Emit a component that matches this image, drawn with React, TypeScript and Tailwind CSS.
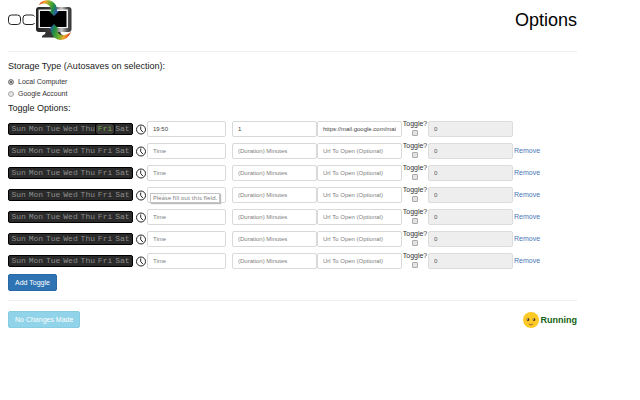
import React, { useState } from "react";

const DAYS = ["Sun", "Mon", "Tue", "Wed", "Thu", "Fri", "Sat"];

type Row = { id: number; time: string; minutes: string; url: string; days: string[] };

const ROWS: Row[] = [
  { id: 1, time: "19:50", minutes: "1", url: "https://mail.google.com/mail", days: ["Fri"] },
  { id: 2, time: "", minutes: "", url: "", days: [] },
  { id: 3, time: "", minutes: "", url: "", days: [] },
  { id: 4, time: "", minutes: "", url: "", days: [] },
  { id: 5, time: "", minutes: "", url: "", days: [] },
  { id: 6, time: "", minutes: "", url: "", days: [] },
  { id: 7, time: "", minutes: "", url: "", days: [] },
];

const FIELD =
  "block h-4 w-full min-w-0 rounded-xs border border-[#d9d9d9] bg-white px-[5px] text-[6px] leading-3 text-[#444] placeholder:text-[#808080] outline-none";

function Logo() {
  return (
    <svg className="block h-10 w-16" viewBox="0 0 64 40" role="img" aria-label="OC">
      <defs>
        <linearGradient id="bezel" x1="0" y1="0" x2="1" y2="0">
          <stop offset="0" stopColor="#222" />
          <stop offset="0.5" stopColor="#444" />
          <stop offset="0.72" stopColor="#c4c4c4" />
          <stop offset="0.88" stopColor="#555" />
          <stop offset="1" stopColor="#333" />
        </linearGradient>
        <linearGradient id="arcTop" gradientUnits="userSpaceOnUse" x1="32" y1="2" x2="50" y2="9">
          <stop offset="0" stopColor="#e0401c" />
          <stop offset="0.25" stopColor="#f3a52c" />
          <stop offset="0.5" stopColor="#6cb02c" />
          <stop offset="0.75" stopColor="#1f8a46" />
          <stop offset="1" stopColor="#2f5cb0" />
        </linearGradient>
        <linearGradient id="arcBottom" gradientUnits="userSpaceOnUse" x1="42" y1="29" x2="62" y2="36">
          <stop offset="0" stopColor="#2f5cb0" />
          <stop offset="0.2" stopColor="#1f8a46" />
          <stop offset="0.5" stopColor="#6cb02c" />
          <stop offset="0.75" stopColor="#f3a52c" />
          <stop offset="1" stopColor="#d92f1c" />
        </linearGradient>
      </defs>
      <rect x="0.500" y="15" width="12" height="9.500" rx="3" fill="none" stroke="#222" />
      <path d="M26.500 16.500Q26 15 24 15H18Q15 15 15 18V21.500Q15 24.500 18 24.500H24Q26 24.500 26.500 23" fill="none" stroke="#222" />
      <path d="M38 31H52L53 34L56 36V37.500H34V36L37 34Z" fill="#333" />
      <rect x="28" y="7" width="35.500" height="25" rx="3" fill="url(#bezel)" />
      <rect x="30.500" y="9.500" width="29.500" height="18.500" fill="#f2f2f2" />
      <rect x="32" y="11" width="26.500" height="16" fill="#000" />
      <path d="M31 5C33 0 41-1 45 2C48 4 49 7 49 11H51L46 16L41 11H43C43 6 39 1 31 5Z" fill="url(#arcTop)" />
      <path d="M46 24L51 29H49C49 35 55 38 63 32C60 40 52 42 47 38C44 36 43 33 43 29H41Z" fill="url(#arcBottom)" />
    </svg>
  );
}

function Clock() {
  return (
    <svg className="block h-[11px] w-[11px]" viewBox="0 0 11 11" fill="none" stroke="#222" aria-hidden="true">
      <circle cx="5" cy="5.500" r="4.500" strokeWidth="1" />
      <path d="M4.700 2.500V5.500L6.800 8" strokeWidth="1" />
    </svg>
  );
}

function Smiley() {
  return (
    <svg className="h-4 w-4" viewBox="0 0 16 16" aria-hidden="true">
      <circle cx="8" cy="8" r="8" fill="#fcc926" />
      <ellipse cx="5" cy="7.500" rx="1.300" ry="1.500" fill="#5a3a22" />
      <ellipse cx="11" cy="7.500" rx="1.300" ry="1.500" fill="#5a3a22" />
      <circle cx="4.500" cy="7" r="0.500" fill="#fff" />
      <circle cx="10.500" cy="7" r="0.500" fill="#fff" />
      <path d="M6 12Q8 14 10 12" fill="none" stroke="#a0642a" />
    </svg>
  );
}

function DayPicker({ initial }: { initial: string[] }) {
  const [picked, setPicked] = useState(initial);
  const flip = (day: string) =>
    setPicked(picked.includes(day) ? picked.filter((d) => d !== day) : [...picked, day]);
  return (
    <div className="mr-[3px] grid h-3 grid-cols-7 rounded-xs border border-black bg-[#2a2a2a] px-px">
      {DAYS.map((day) => (
        <button
          key={day}
          type="button"
          aria-pressed={picked.includes(day)}
          onClick={() => flip(day)}
          className={
            "flex items-center justify-center font-['Liberation_Mono',monospace] text-[8px] leading-[10px] " +
            (picked.includes(day)
              ? "rounded-xs bg-[#3b3838] text-[#6fa548] outline outline-black"
              : "text-[#8c8c8c]")
          }
        >
          {day}
        </button>
      ))}
    </div>
  );
}

function ToggleRow({ row, first, hint }: { row: Row; first: boolean; hint: boolean }) {
  return (
    <div className="grid h-[22px] grid-cols-[128px_11px_1fr_1fr_1fr_26px_1fr_64px] items-center">
      <DayPicker initial={row.days} />
      <Clock />
      <div className="relative min-w-0 pr-1.5">
        <input className={FIELD} aria-label="Time" placeholder="Time" defaultValue={row.time} required />
        {hint && (
          <div
            role="tooltip"
            className="absolute top-1.5 left-[3px] z-10 border border-[#c4c4c4] bg-white/80 px-0.5 font-['Open_Sans',sans-serif] text-[6px] leading-2 whitespace-nowrap text-[#777] shadow-[1px_1px_1px_#bbb]"
          >
            Please fill out this field.
          </div>
        )}
      </div>
      <input className={FIELD} aria-label="Duration in minutes" placeholder="(Duration) Minutes" defaultValue={row.minutes} />
      <input className={FIELD} aria-label="Url to open" placeholder="Url To Open (Optional)" defaultValue={row.url} />
      <label className="flex h-[22px] flex-col items-center gap-px pt-px text-[7px] leading-[10px]">
        Toggle?
        <input
          type="checkbox"
          className="h-1.5 w-1.5 shrink-0 appearance-none rounded-[1px] border border-[#aaa] bg-[#e4e4e4] checked:bg-[#555]"
        />
      </label>
      <input
        className="block h-4 w-full min-w-0 rounded-xs border border-[#dcdcdc] bg-[#eee] px-[5px] text-[6px] leading-3 text-[#555]"
        aria-label="Count"
        defaultValue="0"
        disabled
      />
      {!first && (
        <a href="#remove" className="pl-px text-[7px] leading-3 text-[#4a76b8]">
          Remove
        </a>
      )}
    </div>
  );
}

function StorageOption({ label, checked }: { label: string; checked: boolean }) {
  return (
    <label className="flex h-3 items-center gap-1 text-[7px] text-[#333]">
      <input
        type="radio"
        name="storage"
        defaultChecked={checked}
        className="h-1.5 w-1.5 appearance-none rounded-full border border-[#aaa] bg-[#e4e4e4] checked:border-[#888] checked:bg-[#444] checked:shadow-[inset_0_0_0_1px_#ddd]"
      />
      {label}
    </label>
  );
}

export default function App() {
  return (
    <main className="bg-white pr-[63px] pl-2 font-['Liberation_Sans',Arial,sans-serif] text-[#333]">
      <header className="flex items-center justify-between border-b border-[#eee] pb-[11px]">
        <Logo />
        <h1 className="text-[18px] leading-6 text-black">Options</h1>
      </header>

      <form onSubmit={(e) => e.preventDefault()}>
        <fieldset className="pt-2" aria-labelledby="storage-title">
          <h2 id="storage-title" className="pb-1 text-[9px] leading-3 text-[#222]">
            Storage Type (Autosaves on selection):
          </h2>
          <StorageOption label="Local Computer" checked />
          <StorageOption label="Google Account" checked={false} />
        </fieldset>

        <h2 className="pt-0.5 pb-1 text-[9px] leading-3 text-[#222]">Toggle Options:</h2>
        {ROWS.map((row, i) => (
          <ToggleRow key={row.id} row={row} first={i === 0} hint={i === 3} />
        ))}

        <button type="button" className="mt-0.5 block h-[17px] rounded-xs border border-[#2868a4] bg-[#2e73b4] px-1.5 text-[7px] leading-3 text-white">
          Add Toggle
        </button>

        <footer className="mt-[9px] flex items-center justify-between border-t border-[#eee] pt-2.5">
          <button type="submit" disabled className="h-[17px] rounded-xs border border-[#86cce2] bg-[#91d3e8] px-1.5 text-[7px] leading-3 text-white">
            No Changes Made
          </button>
          <p className="flex items-center gap-0.5 text-[9px] leading-4 font-bold text-[#126312]">
            <Smiley />
            Running
          </p>
        </footer>
      </form>
    </main>
  );
}
